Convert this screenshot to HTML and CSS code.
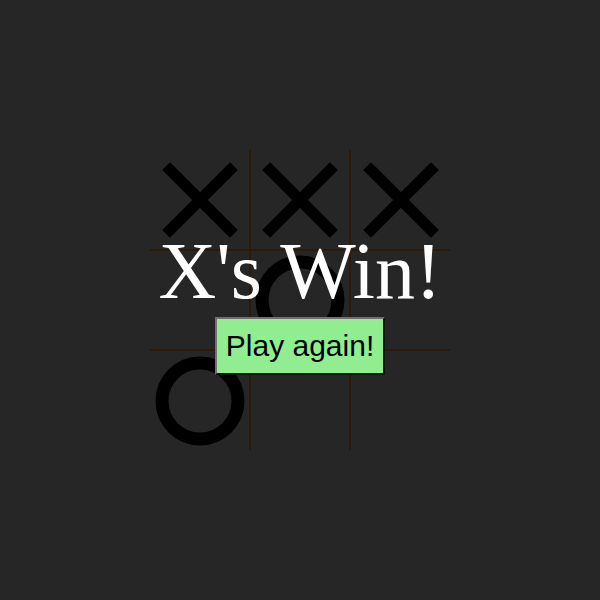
FILE: index.html
```html
<!DOCTYPE html>
<html lang="en">
<head>
  <meta charset="UTF-8">
  <title>Tic Tac Toe</title>
  <link rel="stylesheet" href="styles.css">
</head>
<body>
  <div class="game">
    <div class="board">
      <div class="cell"><svg viewBox="0 0 100 100"><path class="x" d="M20 20L80 80M80 20L20 80"/></svg></div>
      <div class="cell"><svg viewBox="0 0 100 100"><path class="x" d="M20 20L80 80M80 20L20 80"/></svg></div>
      <div class="cell"><svg viewBox="0 0 100 100"><path class="x" d="M20 20L80 80M80 20L20 80"/></svg></div>
      <div class="cell"></div>
      <div class="cell"><svg viewBox="0 0 100 100"><circle class="o" cx="50" cy="50" r="38"/></svg></div>
      <div class="cell"></div>
      <div class="cell"><svg viewBox="0 0 100 100"><circle class="o" cx="50" cy="50" r="38"/></svg></div>
      <div class="cell"></div>
      <div class="cell"></div>
    </div>

    <!-- game over screen sits on top of the board -->
    <div class="result">
      <h1 class="winner">X's Win!</h1>
      <button class="restart">Play again!</button>
    </div>
  </div>
</body>
</html>
```

FILE: styles.css
```css
body {
  margin: 0;
  height: 100vh;
  background: #262626;
  display: flex;
  align-items: center;
  justify-content: center;
}

.game {
  width: 100vw;
  height: 100vh;
  display: flex;
  align-items: center;
  justify-content: center;
  position: relative;
}

.board {
  display: grid;
  grid-template-columns: 99px 98px 99px;
  grid-template-rows: 99px 98px 99px;
  gap: 2px;
  background: #2c1b0b;
  width: 300px;
  height: 300px;
}

.cell {
  background: #262626;
  display: flex;
  align-items: center;
  justify-content: center;
  overflow: visible;
}

.cell svg {
  width: 100px;
  height: 100px;
  flex-shrink: 0;
  overflow: visible;
}

.x {
  stroke: #000;
  stroke-width: 11;
  stroke-linecap: square;
  fill: none;
}

.o {
  stroke: #000;
  stroke-width: 13;
  fill: none;
}

.result {
  position: absolute;
  top: 0;
  left: 0;
  right: 0;
  bottom: 0;
  display: flex;
  flex-direction: column;
  align-items: center;
  justify-content: center;
}

.winner {
  margin: 0;
  color: white;
  font-family: 'Liberation Serif', serif;
  font-size: 80px;
  font-weight: normal;
}

.restart {
  padding: 10px 9px;
  font-family: 'Liberation Sans', Arial, sans-serif;
  font-size: 30px;
  color: #000;
  background: #90ee90;
  border: 2px solid;
  border-color: #707070 #111 #111 #707070;
  cursor: pointer;
}
```
